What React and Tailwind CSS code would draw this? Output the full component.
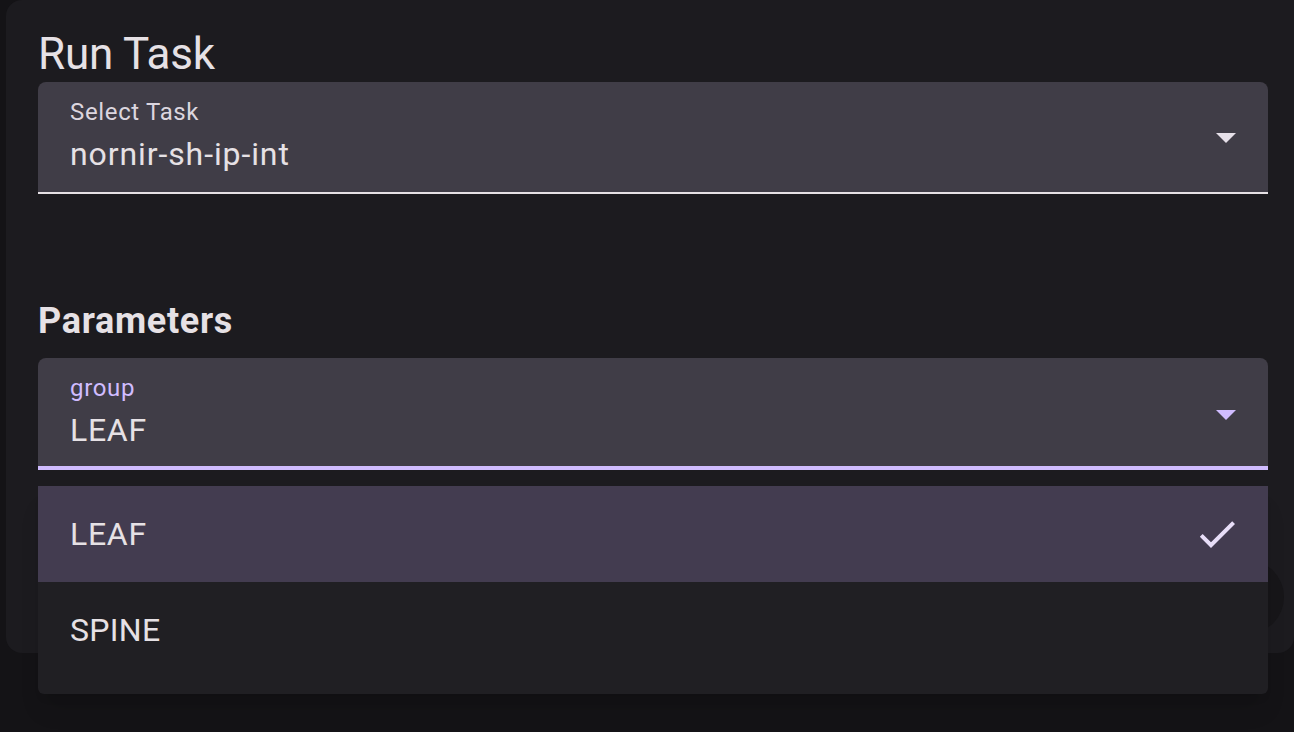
const ArrowDrop = ({ color }) => (
    <svg viewBox="0 0 24 24" className="w-[48px] h-[48px]" fill={color}>
        <path d="M7 10l5 5 5-5z" />
    </svg>
);

const Check = () => (
    <svg viewBox="0 0 24 24" className="w-[48px] h-[48px]" fill="#e8def8">
        <path d="M9 16.17L4.83 12l-1.42 1.41L9 19 21 7l-1.41-1.41z" />
    </svg>
);

const App = () => {
    return (
        <div className="relative min-h-[732px] bg-[#141316] overflow-hidden font-['Roboto',sans-serif] text-[#e6e1e5]">
            <div className="relative ml-[6px] w-[1288px] h-[653px] bg-[#1c1b1f] rounded-b-2xl rounded-tl-2xl pt-[28px] pl-[32px] pr-[26px]">
                <h2 className="text-[44px] leading-[52px] font-normal tracking-[-0.2px] mb-[2px]">Run Task</h2>

                {/* task select */}
                <div className="relative h-[112px] bg-[#403d47] rounded-t-lg border-b-2 border-[#e6e1e5] pl-[32px] pt-[16px]">
                    <div className="text-[24px] leading-[28px] tracking-[0.65px] text-[#dcd6df]">Select Task</div>
                    <div className="mt-[10px] text-[32px] leading-[36px] tracking-[0.9px]">nornir-sh-ip-int</div>
                    <div className="absolute right-[18px] top-[31px]">
                        <ArrowDrop color="#e6e0e9" />
                    </div>
                </div>

                <h3 className="mt-[106px] text-[36px] leading-[42px] font-bold tracking-[0.7px]">Parameters</h3>

                {/* group select, focused */}
                <div className="relative mt-[16px] h-[112px] bg-[#403d47] rounded-t-lg border-b-4 border-[#d0bcff] pl-[32px] pt-[16px]">
                    <div className="text-[24px] leading-[28px] tracking-[0.65px] text-[#d0bcff]">group</div>
                    <div className="mt-[10px] text-[32px] leading-[36px] tracking-[0.7px]">LEAF</div>
                    <div className="absolute right-[18px] top-[32px]">
                        <ArrowDrop color="#d0bcff" />
                    </div>
                </div>

                <div className="absolute left-[1204px] top-[560px] w-[74px] h-[74px] rounded-full bg-[#171619]"></div>
            </div>

            {/* open menu */}
            <div className="absolute left-[38px] top-[486px] w-[1230px] bg-[#201f23] rounded-md shadow-xl pb-[16px]">
                <div className="h-[96px] flex items-center justify-between pl-[32px] pr-[27px] bg-[#433c50]">
                    <span className="text-[32px] leading-[36px] tracking-[0.7px]">LEAF</span>
                    <Check />
                </div>
                <div className="h-[96px] flex items-center pl-[32px]">
                    <span className="text-[32px] leading-[36px] tracking-[0.3px]">SPINE</span>
                </div>
            </div>
        </div>
    );
};

export default App;
